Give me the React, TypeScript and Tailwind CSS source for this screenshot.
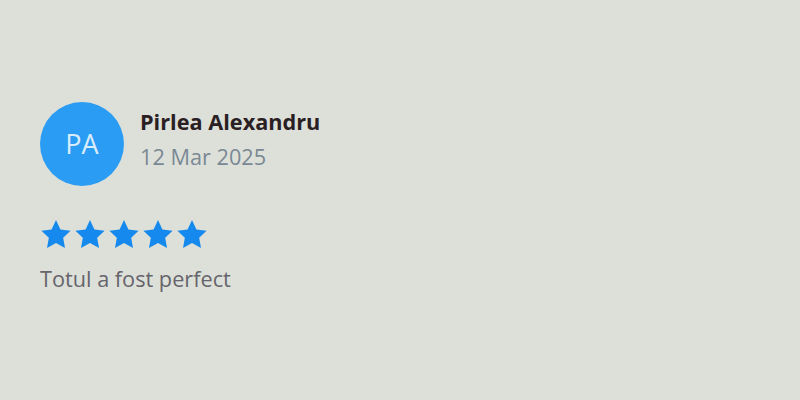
export default function App() {
  const stars = [0, 1, 2, 3, 4];
  return (
    <div
      className="h-[400px] w-[800px] bg-[#dde0d9] px-10 pt-[102px]"
      style={{ fontFamily: '"Open Sans", sans-serif' }}
    >
      <div className="flex items-start gap-4">
        <div className="flex h-[84px] w-[84px] items-center justify-center rounded-full bg-[#2b9cf4] text-[27px] text-[#d9ecfb]">
          PA
        </div>
        <div className="pt-[5px]">
          <div className="text-[21.7px] font-bold leading-[30px] text-[#2a2024]">Pirlea Alexandru</div>
          <div className="mt-[5px] text-[21.7px] leading-[30px] text-[#7a8894]">12 Mar 2025</div>
        </div>
      </div>
      <div className="mt-[33px] flex gap-[2px]">
        {stars.map((i) => (
          <svg key={i} width="32" height="30" viewBox="0 0 24 23" fill="#1589ee">
            <path d="M12 0.8l3.4 7.2 7.8 1-5.7 5.4 1.4 7.8L12 18.4l-6.9 3.8 1.4-7.8L0.8 9l7.8-1z" />
          </svg>
        ))}
      </div>
      <div className="mt-[15px] text-[21.7px] leading-[30px] text-[#66646c]">Totul a fost perfect</div>
    </div>
  );
}
